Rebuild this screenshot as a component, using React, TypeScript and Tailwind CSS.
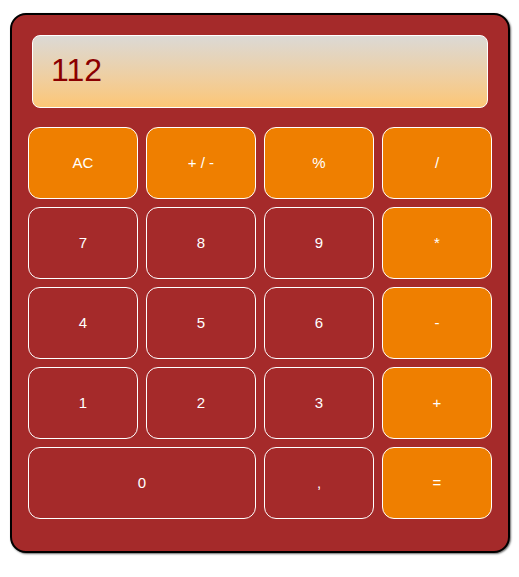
import React from "react";

type B = { label: string; orange?: boolean; wide?: boolean };

const rows: B[] = [
  { label: "AC", orange: true },
  { label: "+ / -", orange: true },
  { label: "%", orange: true },
  { label: "/", orange: true },
  { label: "7" },
  { label: "8" },
  { label: "9" },
  { label: "*", orange: true },
  { label: "4" },
  { label: "5" },
  { label: "6" },
  { label: "-", orange: true },
  { label: "1" },
  { label: "2" },
  { label: "3" },
  { label: "+", orange: true },
  { label: "0", wide: true },
  { label: "," },
  { label: "=", orange: true },
];

export default function App() {
  return (
    <div className="bg-white w-[519px] h-[577px] pt-[13px] pl-[10px]" style={{ fontFamily: '"Liberation Sans", Arial, sans-serif' }}>
      <div className="w-[500px] h-[540px] border-2 border-black rounded-[16px] bg-[#a52a2a] shadow-[1px_1px_2px_rgba(0,0,0,0.6)] pt-[20px] px-[16px]">
        <div className="mx-[4px] h-[73px] border border-white rounded-[8px] bg-gradient-to-b from-[#dbd9d5] to-[#fcc675] flex items-center pl-[18px] pb-[4px]">
          <span className="text-[32px] text-[#8b0000] leading-none">112</span>
        </div>
        <div className="mt-[19px] grid grid-cols-4 gap-[8px]">
          {rows.map((b) => (
            <div
              key={b.label}
              className={
                "h-[72px] border border-white rounded-[12px] flex items-center justify-center text-white text-[15px] " +
                (b.orange ? "bg-[#ef7f00] " : "bg-[#a52a2a] ") +
                (b.wide ? "col-span-2" : "")
              }
            >
              {b.label}
            </div>
          ))}
        </div>
      </div>
    </div>
  );
}
